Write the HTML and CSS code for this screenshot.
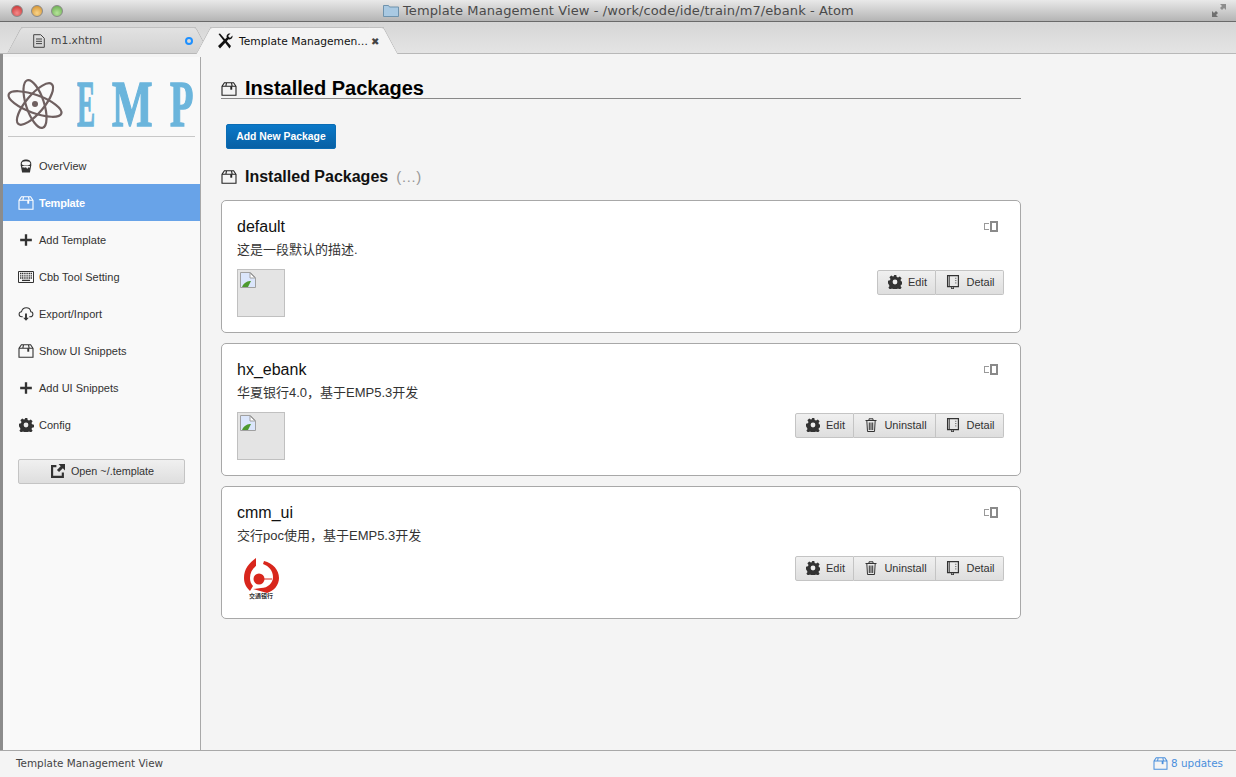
FILE: index.html
```html
<!DOCTYPE html>
<html lang="en">
<head>
    <meta charset="UTF-8">
    <meta name="viewport" content="width=device-width, initial-scale=1.0">
    <title>Template Management View</title>
    <link rel="stylesheet" href="styles.css">
</head>
<body>
    <svg class="defs" width="0" height="0">
        <symbol id="i-package" viewBox="0 0 16 14">
            <path d="M1 4.300 3.400.8h9.200L15 4.300v8.900H1zM1 4.300h14M5.500.8 4.800 4.300M10.500.8l.7 3.500" fill="none" stroke="currentColor" stroke-width="1.100"/>
            <path d="M9.300 4.300h1.900v3.400H9.300z" fill="currentColor"/>
        </symbol>
        <symbol id="i-plus" viewBox="0 0 12 12">
            <path d="M6 1v10M1 6h10" fill="none" stroke="currentColor" stroke-width="2"/>
        </symbol>
        <symbol id="i-bucket" viewBox="0 0 14 16">
            <path d="M1 5.500C1 2 4 .5 7 .5s6 1.500 6 5v1.500l-1.500 8.500h-9L1 7z" fill="currentColor"/>
            <ellipse cx="7" cy="5" rx="4.800" ry="2.400" fill="#f9f9f9"/>
            <path d="M2.500 8h9v1.500l-1 .5-1-.5-1 2-1.500-2-1.500.5-1-.5-1.200.5z" fill="#f9f9f9"/>
        </symbol>
        <symbol id="i-keyboard" viewBox="0 0 16 12">
            <path d="M.5.5h15v11H.5z" fill="none" stroke="currentColor"/>
            <path d="M2 2.500h12M2 4.800h12M2 7h12" fill="none" stroke="currentColor" stroke-width="1.300" stroke-dasharray="1.200 .6"/>
            <path d="M4 9.400h8" fill="none" stroke="currentColor" stroke-width="1.300"/>
        </symbol>
        <symbol id="i-cloud" viewBox="0 0 16 15">
            <path d="M4.500 10.500H3.500C1.800 10.500.6 9.200.6 7.600S1.800 4.900 3.200 5C3.800 2.500 6 .8 8.300.8c2.600 0 4.500 1.800 4.800 4.200 1.400.1 2.300 1.300 2.300 2.700s-1.100 2.800-2.900 2.800h-1" fill="none" stroke="currentColor" stroke-width="1.100"/>
            <path d="M7 7h2v4.500h2L8 14.800 5 11.500h2z" fill="currentColor"/>
        </symbol>
        <symbol id="i-gear" viewBox="0 0 14 14">
            <path d="M5.700 0h2.600l.4 1.900 1.400.6 1.700-1.100 1.800 1.800-1.100 1.700.6 1.400 1.900.4v2.600l-1.900.4-.6 1.400 1.100 1.700-1.800 1.800-1.700-1.100-1.400.6-.4 1.900H5.700l-.4-1.900-1.400-.6-1.700 1.100-1.800-1.800 1.100-1.700-.6-1.400L0 8.300V5.700l1.900-.4.6-1.400-1.100-1.700 1.800-1.800 1.700 1.100 1.400-.6z" fill="currentColor"/>
            <circle cx="7" cy="7" r="2.400" fill="#ececec"/>
        </symbol>
        <symbol id="i-external" viewBox="0 0 13 13">
            <path d="M5 2H1v10h10V8" fill="none" stroke="currentColor" stroke-width="2"/>
            <path d="M7 0h6v6l-2-2-3.500 3.500-2-2L9 2z" fill="currentColor"/>
        </symbol>
        <symbol id="i-trash" viewBox="0 0 12 14">
            <path d="M.5 2.500h11M4 2.500V.8h4v1.700M1.800 2.500l.7 11h7l.7-11M4.300 4.500v7.500M6 4.500v7.500M7.700 4.500v7.500" fill="none" stroke="currentColor"/>
        </symbol>
        <symbol id="i-book" viewBox="0 0 13 15">
            <path d="M.7 12.500V.7h11.600v11.800z" fill="none" stroke="currentColor" stroke-width="1.300"/>
            <path d="M2.500.7v11.800M5 13v2l1-1 1 1v-2" fill="none" stroke="currentColor"/>
            <path d="M9.500 3v7" fill="none" stroke="currentColor" stroke-dasharray="1 1.500"/>
        </symbol>
    </svg>

    <div class="window">
        <div class="titlebar">
            <div class="lights">
                <span class="light red"></span>
                <span class="light yellow"></span>
                <span class="light green"></span>
            </div>
            <div class="window-title">
                <svg class="folder" viewBox="0 0 16 13" width="16" height="13">
                    <path d="M.5 12.500V1.500h5l1 1.500h9v9.500z" fill="#a9c9e2" stroke="#6f93ad"/>
                </svg>
                <span>Template Management View - /work/code/ide/train/m7/ebank - Atom</span>
            </div>
            <svg class="fullscreen" viewBox="0 0 14 14" width="14" height="14">
                <path d="M14 0v6l-2-2-2 2-2-2 2-2-2-2z" fill="#8d8d8d"/>
                <path d="M0 13V7l2 2 2-2 2 2-2 2 2 2z" fill="#6f6f6f"/>
            </svg>
        </div>

        <div class="tabbar">
            <div class="tab">
                <svg class="tab-icon" viewBox="0 0 12 14" width="12" height="14">
                    <path d="M.7.7h7l3.600 3.600v9H.7zM3 5h6M3 7.300h6M3 9.600h6" fill="none" stroke="#444" stroke-width="1"/>
                </svg>
                <span class="tab-name">m1.xhtml</span>
                <span class="modified"></span>
            </div>
            <div class="tab active">
                <svg class="tab-icon" viewBox="0 0 16 16" width="16" height="16">
                    <path d="M1.500 1 3 .5l11 12.500-1.500 2.500z" fill="#111"/>
                    <path d="M15.500 2.500 13 5l-2-2 2.500-2.500C11 0 9 2 9.800 4.500L1 13l2 2.500L11.500 6.200C14 7 16 5 15.500 2.500z" fill="#111"/>
                </svg>
                <span class="tab-name">Template Managemen…</span>
                <span class="close">✖</span>
            </div>
        </div>

        <div class="workspace">
            <aside class="sidebar">
                <div class="logo">
                    <svg class="atom" viewBox="0 0 54 48" width="54" height="48">
                        <g fill="none" stroke="#6f6060" stroke-width="2.200">
                            <ellipse cx="27" cy="24" rx="28" ry="9" transform="rotate(20 27 24)"/>
                            <ellipse cx="27" cy="24" rx="25" ry="9" transform="rotate(72 27 24)"/>
                            <ellipse cx="27" cy="24" rx="26" ry="9" transform="rotate(-50 27 24)"/>
                        </g>
                        <circle cx="27" cy="24" r="3" fill="#6f6060"/>
                    </svg>
                    <div class="logo-text">
                        <span class="letter-e">E</span>
                        <span class="letter-m">M</span>
                        <span class="letter-p">P</span>
                    </div>
                </div>
                <nav class="nav">
                    <a class="nav-item"><svg class="nav-icon"><use href="#i-bucket"/></svg>OverView</a>
                    <a class="nav-item selected"><svg class="nav-icon"><use href="#i-package"/></svg>Template</a>
                    <a class="nav-item"><svg class="nav-icon"><use href="#i-plus"/></svg>Add Template</a>
                    <a class="nav-item"><svg class="nav-icon"><use href="#i-keyboard"/></svg>Cbb Tool Setting</a>
                    <a class="nav-item"><svg class="nav-icon"><use href="#i-cloud"/></svg>Export/Inport</a>
                    <a class="nav-item"><svg class="nav-icon"><use href="#i-package"/></svg>Show UI Snippets</a>
                    <a class="nav-item"><svg class="nav-icon"><use href="#i-plus"/></svg>Add UI Snippets</a>
                    <a class="nav-item"><svg class="nav-icon"><use href="#i-gear"/></svg>Config</a>
                </nav>
                <button class="open-btn"><svg class="btn-icon"><use href="#i-external"/></svg>Open ~/.template</button>
            </aside>

            <main class="content">
                <h1 class="page-title"><svg class="head-icon"><use href="#i-package"/></svg>Installed Packages</h1>
                <button class="primary">Add New Package</button>
                <h2 class="section-title"><svg class="head-icon"><use href="#i-package"/></svg>Installed Packages<span class="count">(…)</span></h2>

                <section class="card">
                    <div class="card-head">
                        <span class="card-name">default</span>
                        <span class="toggle"><i></i><b></b></span>
                    </div>
                    <p class="card-desc">这是一段默认的描述.</p>
                    <div class="card-row">
                        <div class="thumb">
                            <svg class="broken" viewBox="0 0 16 16" width="16" height="16">
                                <path d="M.5.5h10l5 5v10H.5z" fill="#dbe6fb" stroke="#a0a0a0"/>
                                <path d="M2 15c2-5 6-6 9-6l-3 6z" fill="#4e9a2f"/>
                                <path d="M15 6l-5-5v5z" fill="#fff" stroke="#a0a0a0"/>
                            </svg>
                        </div>
                        <div class="btn-group">
                            <button class="btn edit"><svg class="btn-icon"><use href="#i-gear"/></svg>Edit</button>
                            <button class="btn detail"><svg class="btn-icon"><use href="#i-book"/></svg>Detail</button>
                        </div>
                    </div>
                </section>

                <section class="card">
                    <div class="card-head">
                        <span class="card-name">hx_ebank</span>
                        <span class="toggle"><i></i><b></b></span>
                    </div>
                    <p class="card-desc">华夏银行4.0，基于EMP5.3开发</p>
                    <div class="card-row">
                        <div class="thumb">
                            <svg class="broken" viewBox="0 0 16 16" width="16" height="16">
                                <path d="M.5.5h10l5 5v10H.5z" fill="#dbe6fb" stroke="#a0a0a0"/>
                                <path d="M2 15c2-5 6-6 9-6l-3 6z" fill="#4e9a2f"/>
                                <path d="M15 6l-5-5v5z" fill="#fff" stroke="#a0a0a0"/>
                            </svg>
                        </div>
                        <div class="btn-group">
                            <button class="btn edit"><svg class="btn-icon"><use href="#i-gear"/></svg>Edit</button>
                            <button class="btn uninstall"><svg class="btn-icon"><use href="#i-trash"/></svg>Uninstall</button>
                            <button class="btn detail"><svg class="btn-icon"><use href="#i-book"/></svg>Detail</button>
                        </div>
                    </div>
                </section>

                <section class="card">
                    <div class="card-head">
                        <span class="card-name">cmm_ui</span>
                        <span class="toggle"><i></i><b></b></span>
                    </div>
                    <p class="card-desc">交行poc使用，基于EMP5.3开发</p>
                    <div class="card-row">
                        <div class="thumb bank">
                            <svg viewBox="0 0 48 48" width="48" height="48">
                                <path d="M19 3 C12 8 7 14 7 23 C7 29 10 33 13 36 L16 31 C14 29 13 26 13 23 C13 18 15 14 19 11 Z" fill="#d8261c"/>
                                <path d="M27 6 C36 8 42 15 42 23 C42 30 37 36 30 38 L16 34 L24 33 C31 33 36 28 36 22 C36 16 32 11 26 9 Z" fill="#d8261c"/>
                                <circle cx="22" cy="24" r="5.500" fill="#d8261c"/>
                                <path d="M24 24h11" stroke="#d8261c" stroke-width="1"/>
                                <text x="24" y="43" text-anchor="middle" class="bank-name">交通银行</text>
                            </svg>
                        </div>
                        <div class="btn-group">
                            <button class="btn edit"><svg class="btn-icon"><use href="#i-gear"/></svg>Edit</button>
                            <button class="btn uninstall"><svg class="btn-icon"><use href="#i-trash"/></svg>Uninstall</button>
                            <button class="btn detail"><svg class="btn-icon"><use href="#i-book"/></svg>Detail</button>
                        </div>
                    </div>
                </section>
            </main>
        </div>

        <footer class="statusbar">
            <span>Template Management View</span>
            <span class="updates"><svg class="status-icon"><use href="#i-package"/></svg>8 updates</span>
        </footer>
    </div>
</body>
</html>
```
FILE: styles.css
```css
* {
    box-sizing: border-box;
}
body {
    margin: 0;
    overflow: hidden;
    background: #f4f4f4;
    font-family: "Liberation Sans", "Noto Sans CJK SC", sans-serif;
    color: #333;
}
.defs {
    display: block;
    height: 0;
}
.window {
    display: flex;
    flex-direction: column;
    height: 777px;
}

/* title bar */
.titlebar {
    display: flex;
    align-items: center;
    height: 22px;
    padding: 0 10px;
    background: linear-gradient(#e9e9e9, #b4b4b4);
    border-bottom: 1px solid #6a6a6a;
}
.lights {
    display: flex;
    gap: 8px;
    padding-left: 1px;
}
.light {
    width: 12px;
    height: 12px;
    border-radius: 50%;
    border: 1px solid #8a8a8a;
}
.red {
    background: radial-gradient(circle at 50% 70%, #f58a8a, #c62a2a);
}
.yellow {
    background: radial-gradient(circle at 50% 70%, #f9d48a, #d08a24);
}
.green {
    background: radial-gradient(circle at 50% 70%, #b6e49a, #62a848);
}
.window-title {
    display: flex;
    align-items: center;
    gap: 4px;
    margin-left: 320px;
    font-family: "DejaVu Sans", sans-serif;
    font-size: 13px;
    letter-spacing: .1px;
    color: #4a4a4a;
    white-space: nowrap;
}
.fullscreen {
    margin-left: auto;
}

/* tabs */
.tabbar {
    display: flex;
    align-items: flex-end;
    height: 32px;
    padding-left: 21px;
    background: linear-gradient(#d6d6d6, #e4e4e4);
    border-bottom: 1px solid #b8b8b8;
}
.tab {
    position: relative;
    display: flex;
    align-items: center;
    width: 175px;
    height: 26px;
    margin-right: 14px;
    padding-left: 12px;
    background: linear-gradient(#e2e2e2, #d2d2d2);
    border-top: 1px solid #c0c0c0;
    font-family: "DejaVu Sans", sans-serif;
    font-size: 10.7px;
    color: #444;
}
.tab::before,
.tab::after {
    content: '';
    position: absolute;
    top: -1px;
    bottom: 0;
    width: 14px;
    background: inherit;
    border-top: 1px solid #c0c0c0;
}
.tab::before {
    left: -7px;
    transform: skewX(-28deg);
    border-left: 1px solid #b8b8b8;
    border-radius: 3px 0 0 0;
}
.tab::after {
    right: -7px;
    transform: skewX(28deg);
    border-right: 1px solid #b8b8b8;
    border-radius: 0 3px 0 0;
}
.tab.active {
    width: 174px;
    margin-bottom: -1px;
    height: 27px;
    padding-left: 7px;
    background: #f4f4f4;
    color: #111;
    z-index: 1;
}
.tab-icon {
    flex: none;
    position: relative;
    z-index: 1;
    margin-right: 6px;
}
.tab.active .tab-icon {
    margin-right: 6px;
}
.tab-name {
    position: relative;
    z-index: 1;
    white-space: nowrap;
}
.modified {
    position: relative;
    z-index: 1;
    width: 8px;
    height: 8px;
    margin-left: auto;
    margin-right: 3px;
    border: 2px solid #1e90ff;
    border-radius: 50%;
}
.close {
    position: relative;
    z-index: 1;
    margin-left: 3px;
    font-size: 10px;
    color: #444;
}

/* sidebar */
.workspace {
    display: flex;
    flex: 1;
    min-height: 0;
    border-left: 3px solid #8c8c8c;
}
.sidebar {
    flex: none;
    width: 198px;
    margin-top: 3px;
    padding-top: 0;
    background: #f9f9f9;
    border-right: 1px solid #a8a8a8;
}
.logo {
    display: flex;
    gap: 15px;
    align-items: center;
    height: 80px;
    margin: 0 5px;
    padding-top: 15px;
    border-bottom: 1px solid #c8c8c8;
}
.atom {
    flex: none;
    overflow: visible;
}
.logo-text {
    display: flex;
    font-family: "Liberation Serif", serif;
    font-size: 66px;
    font-weight: bold;
    line-height: 50px;
    color: #6bb5dc;
    -webkit-text-stroke: 1.5px #6bb5dc;
}
.logo-text span {
    display: block;
    transform-origin: left center;
}
.letter-e {
    width: 35px;
    transform: scaleX(.41);
}
.letter-m {
    width: 58px;
    transform: scaleX(.65);
}
.letter-p {
    width: 24px;
    transform: scaleX(.58);
}
.nav {
    margin-top: 10px;
}
.nav-item {
    display: flex;
    align-items: center;
    height: 37px;
    padding-left: 15px;
    font-size: 11px;
    color: #333;
}
.nav-icon {
    flex: none;
    width: 16px;
    height: 14px;
    margin-right: 5px;
    color: #333;
}
.selected {
    background: #68a3e8;
    color: #fff;
    font-weight: bold;
    letter-spacing: -.2px;
}
.selected .nav-icon {
    color: #fff;
}
.open-btn {
    display: flex;
    align-items: center;
    justify-content: center;
    width: 167px;
    height: 25px;
    margin: 16px 0 0 15px;
    padding: 0 0 2px 2px;
    background: linear-gradient(#f0f0f0, #dedede);
    border: 1px solid #c4c4c4;
    border-radius: 2px;
    font-family: inherit;
    font-size: 10.8px;
    color: #333;
}
.btn-icon {
    flex: none;
    width: 14px;
    height: 14px;
    margin-right: 6px;
    color: #333;
}

/* main column */
.content {
    flex: none;
    width: 800px;
    margin-left: 20px;
    padding-top: 22px;
}
.page-title {
    display: flex;
    align-items: center;
    height: 23px;
    margin: 0;
    padding-top: 2px;
    font-size: 20px;
    color: #000;
    border-bottom: 1px solid #888;
}
.head-icon {
    flex: none;
    width: 16px;
    height: 14px;
    margin: 1px 8px 0 0;
    color: #222;
}
.primary {
    display: block;
    width: 110px;
    height: 25px;
    margin: 25px 0 0 5px;
    padding: 0;
    background: linear-gradient(#0a78c8, #0860a4);
    border: 1px solid #0a6cb4;
    border-radius: 2px;
    font-family: inherit;
    font-size: 10.4px;
    font-weight: bold;
    color: #fff;
}
.section-title {
    display: flex;
    align-items: center;
    height: 23px;
    margin: 16px 0 12px;
    font-size: 16px;
    color: #111;
}
.count {
    margin-left: 8px;
    font-size: 15px;
    font-weight: normal;
    color: #999;
}
.card {
    height: 133px;
    margin-bottom: 10px;
    padding: 15px;
    background: #fff;
    border: 1px solid #a8a8a8;
    border-radius: 5px;
}
.card-head {
    display: flex;
    align-items: center;
    justify-content: space-between;
    height: 20px;
    padding-top: 1px;
}
.card-name {
    font-size: 16px;
    color: #111;
}
.toggle {
    display: flex;
    align-items: center;
    gap: 1px;
    margin-right: 7px;
}
.toggle i {
    width: 5px;
    height: 7px;
    border: 1px solid #999;
    border-right: 0;
}
.toggle b {
    width: 8px;
    height: 11px;
    border: 2px solid #8a8a8a;
    background: #fff;
}
.card-desc {
    height: 18px;
    margin: 5px 0 0;
    font-size: 13px;
    line-height: 18px;
    color: #333;
}
.card-row {
    display: flex;
    justify-content: space-between;
    margin-top: 10px;
}
.thumb {
    width: 48px;
    height: 48px;
    padding: 1px;
    background: #e4e4e4;
    border: 1px solid #c0c0c0;
}
.broken {
    display: block;
    margin: 1px;
}
.bank {
    padding: 0;
    background: #fff;
    border: 0;
}
.bank-name {
    font-size: 6px;
    font-weight: bold;
    font-family: "Noto Sans CJK SC", sans-serif;
    fill: #333;
}
.btn-group {
    display: flex;
    height: 25px;
    margin: 1px 1px 0 0;
}
.btn {
    display: flex;
    align-items: center;
    justify-content: center;
    height: 25px;
    padding: 0 0 2px 2px;
    background: linear-gradient(#f0f0f0, #dedede);
    border: 1px solid #c4c4c4;
    border-left-width: 0;
    font-family: inherit;
    font-size: 11px;
    color: #333;
}
.btn:first-child {
    border-left-width: 1px;
    border-radius: 2px 0 0 2px;
}
.btn:last-child {
    border-radius: 0 2px 2px 0;
}
.edit {
    width: 59px;
}
.uninstall {
    width: 82px;
}
.detail {
    width: 68px;
}

/* status bar */
.statusbar {
    display: flex;
    align-items: center;
    justify-content: space-between;
    height: 27px;
    padding: 0 13px 2px 16px;
    background: #f4f4f4;
    border-top: 1px solid #a8a8a8;
    font-family: "DejaVu Sans", sans-serif;
    font-size: 10.4px;
    color: #444;
}
.updates {
    display: flex;
    align-items: center;
    color: #4a8fdc;
}
.status-icon {
    width: 15px;
    height: 13px;
    margin-right: 3px;
}
```
